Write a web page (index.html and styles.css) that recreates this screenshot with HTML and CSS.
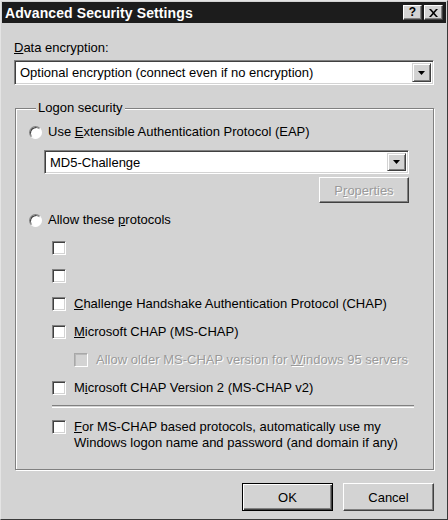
FILE: index.html
```html
<!DOCTYPE html>
<html>
<head>
<meta charset="utf-8">
<link rel="stylesheet" href="styles.css">
</head>
<body>
<div class="window">
  <div class="titlebar">
    <span class="title">Advanced Security Settings</span>
    <div class="tbtns">
      <span class="tbtn help">?</span>
      <span class="tbtn"><svg width="9" height="8" viewBox="0 0 9 8"><path d="M0 0h2l2.5 2.8L7 0h2L5.5 4 9 8H7L4.5 5.2 2 8H0l3.5-4z" fill="#000"/></svg></span>
    </div>
  </div>
  <div class="content">
    <div class="label"><u>D</u>ata encryption:</div>
    <div class="combo">
      <span class="combo-text">Optional encryption (connect even if no encryption)</span>
      <span class="drop"><svg width="7" height="4" viewBox="0 0 7 4"><path d="M0 0h7L3.5 4z" fill="#000"/></svg></span>
    </div>

    <fieldset class="group">
      <legend>Logon security</legend>
      <div class="row first"><span class="radio"></span><span>Use <u>E</u>xtensible Authentication Protocol (EAP)</span></div>
      <div class="combo eap">
        <span class="combo-text">MD5-Challenge</span>
        <span class="drop"><svg width="7" height="4" viewBox="0 0 7 4"><path d="M0 0h7L3.5 4z" fill="#000"/></svg></span>
      </div>
      <div class="prop-row"><span class="btn disabled">P<u>r</u>operties</span></div>
      <div class="row allow"><span class="radio"></span><span>Allow these <u>p</u>rotocols</span></div>
      <div class="row cbrow"><span class="cb"></span></div>
      <div class="row cbrow"><span class="cb"></span></div>
      <div class="row cbrow"><span class="cb"></span><span><u>C</u>hallenge Handshake Authentication Protocol (CHAP)</span></div>
      <div class="row cbrow"><span class="cb"></span><span><u>M</u>icrosoft CHAP (MS-CHAP)</span></div>
      <div class="row cbrow sub"><span class="cb off"></span><span class="dis">Allow older MS-CHAP version for <u>W</u>indows 95 servers</span></div>
      <div class="row cbrow"><span class="cb"></span><span>M<u>i</u>crosoft CHAP Version 2 (MS-CHAP v2)</span></div>
      <div class="sep"></div>
      <div class="row cbrow multi"><span class="cb"></span><span><u>F</u>or MS-CHAP based protocols, automatically use my<br>Windows logon name and password (and domain if any)</span></div>
    </fieldset>

    <div class="actions">
      <span class="btn default">OK</span>
      <span class="btn">Cancel</span>
    </div>
  </div>
</div>
</body>
</html>
```

FILE: styles.css
```css
html, body {
  margin: 0;
  padding: 0;
  background: #d3d3d3;
}
.window {
  width: 448px;
  height: 520px;
  box-sizing: border-box;
  border: 1px solid;
  border-color: #e4e4e4 #3a3a3a #3a3a3a #e4e4e4;
  padding: 1px;
  background: #d3d3d3;
  font-family: "Liberation Sans", Arial, sans-serif;
  font-size: 13px;
  color: #000;
}
.titlebar {
  height: 21px;
  background: #1c1c1c;
  display: flex;
  align-items: center;
  justify-content: space-between;
  padding: 0 3px 0 3px;
}
.title {
  color: #fff;
  font-weight: bold;
  font-size: 14px;
  letter-spacing: 0.1px;
}
.tbtns {
  display: flex;
  gap: 2px;
}
.tbtn {
  width: 19px;
  height: 15px;
  box-sizing: border-box;
  background: #d3d3d3;
  border: 1px solid;
  border-color: #fff #404040 #404040 #fff;
  box-shadow: inset -1px -1px 0 #808080;
  display: flex;
  align-items: center;
  justify-content: center;
  font-weight: bold;
  font-size: 12px;
  line-height: 13px;
}
.content {
  padding: 0 12px;
}
.label {
  margin-top: 17px;
  height: 16px;
  line-height: 16px;
}
.combo {
  margin-top: 4px;
  height: 25px;
  box-sizing: border-box;
  background: #fff;
  border: 1px solid;
  border-color: #808080 #fff #fff #808080;
  box-shadow: inset 1px 1px 0 #404040, inset -1px -1px 0 #d3d3d3;
  display: flex;
  align-items: center;
  padding: 2px;
}
.combo-text {
  flex: 1;
  padding-left: 3px;
}
.drop {
  width: 19px;
  height: 100%;
  box-sizing: border-box;
  background: #d3d3d3;
  border: 1px solid;
  border-color: #d3d3d3 #404040 #404040 #d3d3d3;
  box-shadow: inset 1px 1px 0 #fff, inset -1px -1px 0 #808080;
  display: flex;
  align-items: center;
  justify-content: center;
}
.group {
  margin: 15px 0 0 1px;
  padding: 0 0 18px 13px;
  min-width: 0;
  border: 1px solid #808080;
  box-shadow: inset 1px 1px 0 #fff, 1px 1px 0 #fff;
}
.group legend {
  margin-left: 7px;
  padding: 0 2px;
  line-height: 16px;
  background: #d3d3d3;
}
.row {
  display: flex;
  align-items: center;
  height: 16px;
  line-height: 16px;
  white-space: nowrap;
}
.row.first { margin-top: 8px; }
.radio {
  width: 13px;
  height: 13px;
  box-sizing: border-box;
  border-radius: 50%;
  background: #fff;
  border: 1px solid;
  border-color: #808080 #fff #fff #808080;
  box-shadow: inset 1px 1px 0 #404040;
  margin-right: 6px;
  flex: none;
}
.combo.eap {
  margin: 10px 24px 0 15px;
  height: 24px;
}
.prop-row {
  margin: 3px 24px 0 0;
  display: flex;
  justify-content: flex-end;
}
.btn {
  display: flex;
  align-items: center;
  justify-content: center;
  box-sizing: border-box;
  width: 90px;
  height: 26px;
  background: #d3d3d3;
  border: 1px solid;
  border-color: #fff #404040 #404040 #fff;
  box-shadow: inset -1px -1px 0 #808080;
  font-size: 13px;
}
.btn.disabled {
  color: #9a9a9a;
  text-shadow: 1px 1px 0 #fff;
}
.row.allow { margin-top: 9px; }
.row.cbrow {
  margin-top: 12px;
  padding-left: 23px;
}
.cb {
  width: 14px;
  height: 14px;
  box-sizing: border-box;
  background: #fff;
  border: 1px solid;
  border-color: #808080 #fff #fff #808080;
  box-shadow: inset 1px 1px 0 #404040, inset -1px -1px 0 #d3d3d3;
  margin-right: 8px;
  flex: none;
}
.cb.off {
  background: #d3d3d3;
  border-color: #a8a8a8 #fff #fff #a8a8a8;
  box-shadow: inset 1px 1px 0 #b8b8b8;
}
.row.sub { padding-left: 45px; }
.dis {
  color: #9a9a9a;
  text-shadow: 1px 1px 0 #fff;
}
.sep {
  margin: 9px 19px 0 23px;
  height: 1px;
  border-top: 1px solid #808080;
  border-bottom: 1px solid #fff;
}
.row.multi {
  margin-top: 11px;
  height: 32px;
  align-items: flex-start;
}
.row.multi .cb { margin-top: 1px; }
.actions {
  display: flex;
  justify-content: flex-end;
  gap: 10px;
  margin-top: 13px;
}
.actions .btn {
  width: 91px;
  height: 28px;
}
.btn.default {
  border: 1px solid #000;
  box-shadow: inset 1px 1px 0 #fff, inset -1px -1px 0 #404040, inset -2px -2px 0 #808080;
}
```
